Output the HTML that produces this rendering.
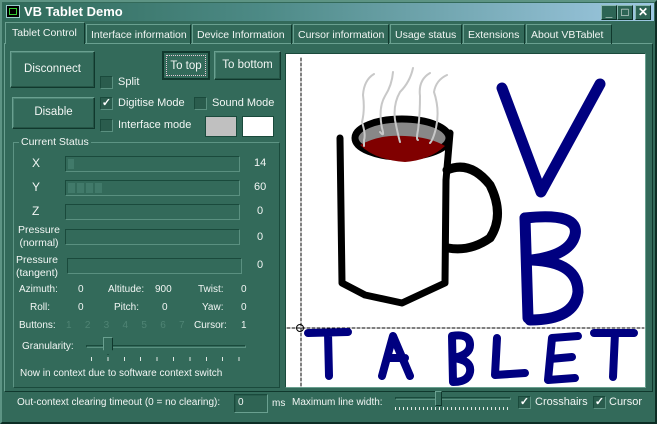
<!DOCTYPE html>
<html><head><meta charset="utf-8"><style>
*{box-sizing:border-box;margin:0;padding:0}
body{width:657px;height:424px;overflow:hidden;background:#336a5a;font-family:"Liberation Sans",sans-serif;font-size:10px;color:#f2f6f4;position:relative}
.a{position:absolute;white-space:nowrap}
.win{position:absolute;left:0;top:0;width:657px;height:424px;border:2px solid;border-color:#5d9484 #0d2e25 #0d2e25 #5d9484}
.title{position:absolute;left:3px;top:3px;width:651px;height:18px;background:linear-gradient(90deg,#2f6a59 0%,#4d8a86 40%,#9ec8e2 100%)}
.raised{position:absolute;white-space:nowrap;border:1px solid;border-color:#6aa090 #10382d #10382d #6aa090;box-shadow:inset -1px -1px 0 #255546,inset 1px 1px 0 #4a8272}
.sunk{position:absolute;border:1px solid;border-color:#1a4a3c #6aa090 #6aa090 #1a4a3c;box-shadow:inset 1px 1px 0 #275a4b}
.cb{position:absolute;width:13px;height:13px;background:#2a5c4d;border:1px solid;border-color:#1a4a3c #5a9080 #5a9080 #1a4a3c;color:#fff;font-size:11px;line-height:11px;text-align:center;font-weight:bold}
.tab{position:absolute;white-space:nowrap;overflow:hidden;top:24px;height:20px;border:1px solid;border-bottom:none;border-color:#6aa090 #10382d #10382d #6aa090;padding:4px 0 0 4px;font-size:10.5px}
.bar{position:absolute;height:16px;border:1px solid;border-color:#1a4a3c #5a9080 #5a9080 #1a4a3c}
.dim{color:#4f8474}
.tb{position:absolute;top:5px;width:16px;height:15px;background:#2d6555;border:1px solid;border-color:#8ab8b0 #0d2e25 #0d2e25 #8ab8b0;color:#fff;font-size:12px;text-align:center;line-height:12px;font-weight:bold}
</style></head><body>
<div class="win"></div>
<div class="title"></div>
<div class="a" style="left:6px;top:5px;width:14px;height:13px;background:#000;border:1px solid #9cc"><div style="position:absolute;left:2px;top:2px;width:8px;height:7px;border:1px solid #3c3"></div></div>
<div class="a" style="left:24px;top:4px;font-weight:bold;font-size:13px;color:#fff">VB Tablet Demo</div>
<div class="tb" style="left:601px">_</div>
<div class="tb" style="left:617px">□</div>
<div class="tb" style="left:635px">✕</div>

<div class="a" style="left:4px;top:43px;width:649px;height:349px;border:1px solid;border-color:#6aa090 #10382d #10382d #6aa090"></div>
<div class="tab" style="left:5px;top:22px;height:22px;width:80px;background:#336a5a;z-index:2;padding-top:4px;padding-left:6px">Tablet Control</div>
<div class="tab" style="left:86px;width:105px">Interface information</div>
<div class="tab" style="left:192px;width:100px">Device Information</div>
<div class="tab" style="left:293px;width:96px">Cursor information</div>
<div class="tab" style="left:390px;width:72px">Usage status</div>
<div class="tab" style="left:463px;width:62px">Extensions</div>
<div class="tab" style="left:526px;width:86px">About VBTablet</div>

<div class="raised" style="left:10px;top:51px;width:85px;height:37px;text-align:center;line-height:34px;font-size:11.5px">Disconnect</div>
<div class="raised" style="left:12px;top:97px;width:83px;height:32px;text-align:center;line-height:29px;font-size:11.5px">Disable</div>
<div class="a" style="left:162px;top:51px;width:48px;height:29px;border:2px solid #10382d"><div style="position:absolute;left:2px;top:2px;right:2px;bottom:2px;border:1px dotted #e8c8d8;text-align:center;line-height:20px;font-size:11.5px">To top</div></div>
<div class="raised" style="left:214px;top:51px;width:67px;height:29px;text-align:center;line-height:26px;font-size:11.5px">To bottom</div>
<div class="cb" style="left:100px;top:76px"></div><div class="a" style="left:118px;top:76px;font-size:11px">Split</div>
<div class="cb" style="left:100px;top:97px">✓</div><div class="a" style="left:118px;top:97px;font-size:11px">Digitise Mode</div>
<div class="cb" style="left:194px;top:97px"></div><div class="a" style="left:212px;top:97px;font-size:11px">Sound Mode</div>
<div class="cb" style="left:100px;top:119px"></div><div class="a" style="left:118px;top:119px;font-size:11px">Interface mode</div>
<div class="a" style="left:205px;top:116px;width:32px;height:21px;background:#c0c0c0;border:1px solid #1a4a3c"></div>
<div class="a" style="left:242px;top:116px;width:32px;height:21px;background:#fff;border:1px solid #1a4a3c"></div>

<div class="a" style="left:13px;top:142px;width:267px;height:246px;border:1px solid;border-color:#5d9484 #1a4a3c #1a4a3c #5d9484"></div>
<div class="a" style="left:19px;top:136px;background:#336a5a;padding:0 2px;font-size:10.5px">Current Status</div>
<div class="a" style="left:32px;top:156px;font-size:12px">X</div><div class="bar" style="left:65px;top:156px;width:175px"><div style="position:absolute;left:2px;top:2px;width:6px;height:10px;background:#417a6a"></div></div><div class="a" style="left:254px;top:157px;font-size:11px">14</div>
<div class="a" style="left:32px;top:180px;font-size:12px">Y</div><div class="bar" style="left:65px;top:180px;width:175px"><div style="position:absolute;left:2px;top:2px;width:34px;height:10px;background:repeating-linear-gradient(90deg,#417a6a 0 7px,transparent 7px 9px)"></div></div><div class="a" style="left:254px;top:181px;font-size:11px">60</div>
<div class="a" style="left:32px;top:204px;font-size:12px">Z</div><div class="bar" style="left:65px;top:204px;width:175px"></div><div class="a" style="left:257px;top:205px;font-size:11px">0</div>
<div class="a" style="left:18px;top:224px;line-height:13px;text-align:center;font-size:10.5px">Pressure<br>(normal)</div><div class="bar" style="left:65px;top:229px;width:175px"></div><div class="a" style="left:257px;top:231px;font-size:11px">0</div>
<div class="a" style="left:16px;top:254px;line-height:13px;text-align:center;font-size:10.5px">Pressure<br>(tangent)</div><div class="bar" style="left:67px;top:258px;width:175px"></div><div class="a" style="left:257px;top:259px;font-size:11px">0</div>
<div class="a" style="left:19px;top:284px">Azimuth:</div><div class="a" style="left:78px;top:284px">0</div><div class="a" style="left:108px;top:284px">Altitude:</div><div class="a" style="left:155px;top:284px">900</div><div class="a" style="left:198px;top:284px">Twist:</div><div class="a" style="left:241px;top:284px">0</div>
<div class="a" style="left:30px;top:302px">Roll:</div><div class="a" style="left:78px;top:302px">0</div><div class="a" style="left:114px;top:302px">Pitch:</div><div class="a" style="left:162px;top:302px">0</div><div class="a" style="left:202px;top:302px">Yaw:</div><div class="a" style="left:241px;top:302px">0</div>
<div class="a" style="left:19px;top:320px">Buttons:</div>
<div class="a dim" style="left:66px;top:320px;word-spacing:10.5px">1 2 3 4 5 6 7 8</div>
<div class="a" style="left:194px;top:320px">Cursor:</div><div class="a" style="left:241px;top:320px">1</div>
<div class="a" style="left:22px;top:341px">Granularity:</div>
<div class="a" style="left:86px;top:345px;width:160px;height:3px;border:1px solid;border-color:#1a4a3c #5a9080 #5a9080 #1a4a3c"></div>
<div class="a" style="left:103px;top:337px;width:10px;height:18px;background:#336a5a;border:1px solid;border-color:#6aa090 #10382d #10382d #6aa090;clip-path:polygon(0 0,100% 0,100% 70%,50% 100%,0 70%)"></div>
<div class="a" style="left:91px;top:357px;width:152px;height:4px;background:repeating-linear-gradient(90deg,#e0e8e4 0 1px,transparent 1px 16.4px)"></div>
<div class="a" style="left:20px;top:368px">Now in context due to software context switch</div>

<div class="a" style="left:285px;top:53px;width:361px;height:335px;border:1px solid;border-color:#1a4a3c #6aa090 #6aa090 #1a4a3c;background:#fff"></div>
<svg class="a" style="left:0;top:0" width="657" height="424" viewBox="0 0 657 424">
<g fill="none" stroke-linecap="round" stroke-linejoin="round">
<line x1="301" y1="58" x2="301" y2="386" stroke="#000" stroke-dasharray="3,2"/>
<line x1="287" y1="328" x2="644" y2="328" stroke="#000" stroke-dasharray="3,2"/>
<circle cx="300" cy="328" r="3.5" stroke="#000"/>
<ellipse cx="402" cy="138" rx="47" ry="19" fill="#888" stroke="#000" stroke-width="7"/>
<path d="M360 145 Q380 134 405 136 Q430 137 445 146 Q430 160 405 162 Q375 160 360 145 Z" fill="#800000" stroke="none"/>
<path d="M340 138 L342 283 L365 295 L402 303 L445 283 L446 180 L450 133" stroke="#000" stroke-width="7"/>
<path d="M447 170 Q470 160 490 185 Q505 215 490 238 Q470 252 448 248" stroke="#000" stroke-width="9"/>
<g stroke="#c8c8c8" stroke-width="2">
<path d="M374 74 Q364 80 363 95 Q365 110 362 122 Q366 135 364 140 L364 146"/>
<path d="M393 72 Q392 85 385 96 Q378 108 382 128 Q385 138 380 132"/>
<path d="M413 68 Q410 82 400 92 Q393 104 395 120 Q398 135 400 142"/>
<path d="M430 73 Q418 80 420 96 Q420 115 418 130 Q416 140 418 140"/>
<path d="M447 75 Q436 80 434 92 Q440 110 436 128 Q433 140 430 143"/>
</g>
<g stroke="#000080" stroke-width="11">
<path d="M502 88 L541 192 L600 84"/>
<path d="M525 218 L528 318"/>
<path d="M525 218 Q580 212 575 235 Q570 255 532 260 Q578 262 578 292 Q575 320 530 320"/>
</g>
<g stroke="#000080" stroke-width="8">
<path d="M308 333 L348 332 M328 333 L329 376"/>
<path d="M382 376 L393 336 L410 376 M387 358 L405 358"/>
<path d="M452 336 L453 382 M452 336 Q470 333 470 345 Q470 355 453 358 Q472 360 470 372 Q468 382 453 382"/>
<path d="M497 338 L495 375 L525 373"/>
<path d="M552 338 L548 380 M552 338 L578 336 M550 359 L572 357 M548 380 L575 378"/>
<path d="M594 333 L634 333 M615 333 L613 377"/>
</g>
</g>
</svg>

<div class="a" style="left:17px;top:397px">Out-context clearing timeout (0 = no clearing):</div>
<div class="sunk" style="left:234px;top:394px;width:34px;height:19px;background:#2f6454;padding:2px 3px">0</div>
<div class="a" style="left:272px;top:398px">ms</div>
<div class="a" style="left:292px;top:397px">Maximum line width:</div>
<div class="a" style="left:395px;top:397px;width:116px;height:3px;border:1px solid;border-color:#1a4a3c #5a9080 #5a9080 #1a4a3c"></div>
<div class="a" style="left:435px;top:391px;width:7px;height:15px;background:#336a5a;border:1px solid;border-color:#6aa090 #10382d #10382d #6aa090"></div>
<div class="a" style="left:395px;top:407px;width:116px;height:3px;background:repeating-linear-gradient(90deg,#e0e8e4 0 1px,transparent 1px 4px)"></div>
<div class="cb" style="left:518px;top:396px">✓</div><div class="a" style="left:535px;top:396px;font-size:11px">Crosshairs</div>
<div class="cb" style="left:593px;top:396px">✓</div><div class="a" style="left:609px;top:396px;font-size:11px">Cursor</div>
</body></html>
